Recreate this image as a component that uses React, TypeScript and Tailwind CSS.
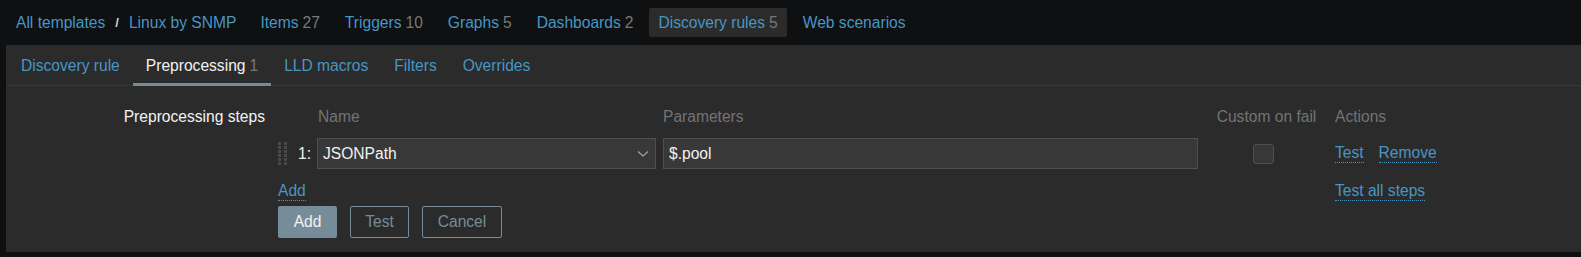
import React from 'react';

const nav = [
  { label: 'Items', count: '27' },
  { label: 'Triggers', count: '10' },
  { label: 'Graphs', count: '5' },
  { label: 'Dashboards', count: '2' },
  { label: 'Discovery rules', count: '5', active: true },
  { label: 'Web scenarios', count: '' },
];

const tabs = [
  { label: 'Discovery rule', count: '' },
  { label: 'Preprocessing', count: '1', active: true },
  { label: 'LLD macros', count: '' },
  { label: 'Filters', count: '' },
  { label: 'Overrides', count: '' },
];

function DragHandle() {
  const dots = [];
  for (let r = 0; r < 6; r++) {
    dots.push(<rect key={`a${r}`} x={0} y={r * 4} width={3} height={3} />);
    dots.push(<rect key={`b${r}`} x={6} y={r * 4} width={3} height={3} />);
  }
  return (
    <svg width="9" height="24" viewBox="0 0 9 24" fill="#4a4a4a">
      {dots}
    </svg>
  );
}

function LinkText({ children }: { children: React.ReactNode }) {
  return (
    <span className="text-[#4796c4] leading-[18px] border-b border-dotted border-[#4796c4]">{children}</span>
  );
}

export default function App() {
  return (
    <div className="w-[1581px] h-[257px] bg-[#0e1012] text-[15.6px] text-[#f2f2f2] font-['Liberation_Sans',Arial,sans-serif] overflow-hidden">
      {/* top navigation */}
      <nav className="h-[45px] flex items-center pl-[16px]">
        <span className="text-[#4796c4]">All templates</span>
        <span className="mx-[10px] text-[13px] text-[#d0d0d0] font-bold">/</span>
        <span className="text-[#4796c4]">Linux by SNMP</span>
        <div className="flex items-center gap-[7px] ml-[15px]">
          {nav.map((n) => (
            <div
              key={n.label}
              className={`h-[29px] flex items-center px-[9px] rounded-[2px] ${n.active ? 'bg-[#2b2b2b]' : ''}`}
            >
              <span className="text-[#4796c4]">{n.label}</span>
              {n.count && <span className="ml-[4px] text-[#787878]">{n.count}</span>}
            </div>
          ))}
        </div>
      </nav>

      {/* panel */}
      <div className="ml-[6px] h-[207px] bg-[#2b2b2b]">
        <div className="flex pl-[2px] border-b border-[#383838]">
          {tabs.map((t) => (
            <div
              key={t.label}
              className={`h-[41px] -mb-px pt-[4px] flex items-center px-[13px] border-b-[3px] ${t.active ? 'border-[#768d99]' : 'border-transparent'}`}
            >
              <span className={t.active ? 'text-[#f2f2f2]' : 'text-[#4796c4]'}>{t.label}</span>
              {t.count && <span className="ml-[4px] text-[#787878]">{t.count}</span>}
            </div>
          ))}
        </div>

        <div className="flex pt-[19px]">
          <div className="w-[259px] text-right h-[24px] leading-[24px]">Preprocessing steps</div>
          <div className="ml-[13px]">
            <div className="grid grid-cols-[39px_346px_535px_137px_auto] items-center">
              <div className="h-[24px]"></div>
              <div className="h-[24px] leading-[24px] text-[#737373] pl-px">Name</div>
              <div className="h-[24px] leading-[24px] text-[#737373]">Parameters</div>
              <div className="h-[24px] leading-[24px] text-[#737373] text-center">Custom on fail</div>
              <div className="h-[24px] leading-[24px] text-[#737373]">Actions</div>

              <div className="flex items-center mt-[9px] h-[31px]">
                <DragHandle />
                <span className="ml-[11px]">1:</span>
              </div>
              <div className="mt-[9px] pr-[7px]">
                <div className="h-[31px] flex items-center justify-between bg-[#383838] border border-[#4f4f4f] pl-[5px] pr-[6px]">
                  <span>JSONPath</span>
                  <svg width="12" height="8" viewBox="0 0 12 8" fill="none" stroke="#a0a0a0" strokeWidth="1.3">
                    <polyline points="1,1.5 6,6 11,1.5" />
                  </svg>
                </div>
              </div>
              <div className="mt-[9px] h-[31px] flex items-center bg-[#383838] border border-[#4f4f4f] px-[5px]">
                $.pool
              </div>
              <div className="mt-[9px] flex justify-center">
                <div className="w-[21px] h-[20px] mr-[6px] bg-[#383838] border border-[#4f4f4f] rounded-[3px]"></div>
              </div>
              <div className="mt-[9px] flex items-center gap-[15px]">
                <LinkText>Test</LinkText>
                <LinkText>Remove</LinkText>
              </div>

              <div className="col-span-4 mt-[12px] h-[20px] flex items-center">
                <LinkText>Add</LinkText>
              </div>
              <div className="mt-[12px] h-[20px] flex items-center">
                <LinkText>Test all steps</LinkText>
              </div>
            </div>

            <div className="flex gap-[13px] mt-[5px]">
              <button className="h-[32px] w-[59px] rounded-[2px] bg-[#768d99] text-[#f2f2f2]">Add</button>
              <button className="h-[32px] w-[59px] rounded-[2px] border border-[#768d99] text-[#768d99]">Test</button>
              <button className="h-[32px] w-[80px] rounded-[2px] border border-[#768d99] text-[#768d99]">Cancel</button>
            </div>
          </div>
        </div>
      </div>
    </div>
  );
}
